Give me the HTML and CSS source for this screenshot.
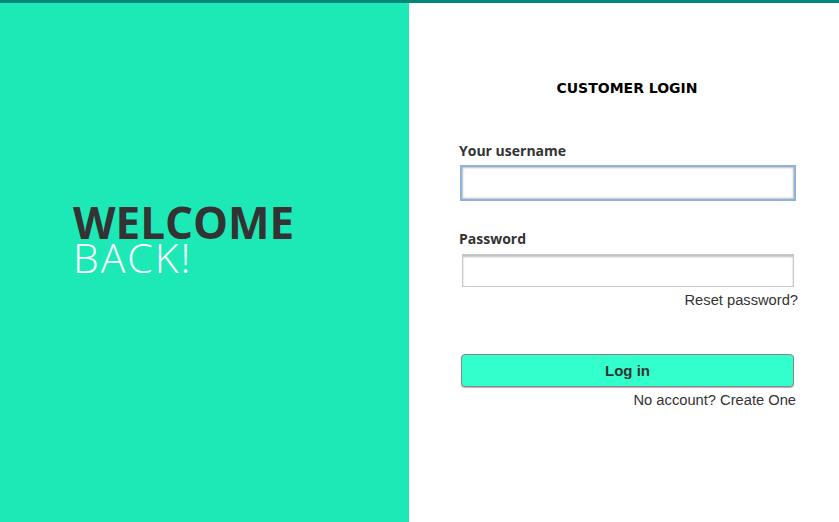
FILE: index.html
```html
<!DOCTYPE html>
<html>
<head>
<meta charset="utf-8">
<link rel="stylesheet" href="styles.css">
</head>
<body>
<div class="page">
  <div class="welcome">
    <h1 class="welcome-title"><span class="w1">WELCOME</span><span class="w2">BACK!</span></h1>
  </div>
  <div class="login">
    <h2 class="login-title">CUSTOMER LOGIN</h2>
    <form class="form">
      <label class="label">Your username</label>
      <input class="input input-focus" type="text">
      <label class="label label-pass">Password</label>
      <input class="input input-pass" type="password">
      <div class="link-row"><span class="link">Reset password?</span></div>
      <button class="btn" type="button">Log in</button>
      <div class="link-row link-row2"><span class="link">No account? Create One</span></div>
    </form>
  </div>
</div>
</body>
</html>
```
FILE: styles.css
```css
html, body {
  margin: 0;
  padding: 0;
  background: #ffffff;
}
.page {
  width: 839px;
  height: 522px;
  border-top: 3px solid #00877a;
  box-sizing: border-box;
  display: flex;
}
.welcome {
  width: 409px;
  background: #1de9b6;
  padding: 202px 0 0 73px;
  box-sizing: border-box;
}
.welcome-title {
  margin: 0;
  font-family: "Open Sans", sans-serif;
  font-size: 44px;
  line-height: 35px;
  display: flex;
  flex-direction: column;
}
.w1 {
  font-weight: 700;
  color: #333333;
}
.w2 {
  font-size: 41px;
  font-weight: 300;
  color: #ffffff;
  letter-spacing: 2px;
}
.login {
  flex: 1;
  padding: 77px 41px 0 50px;
  display: flex;
  flex-direction: column;
}
.login-title {
  margin: 0;
  text-align: center;
  font-family: "DejaVu Sans", sans-serif;
  font-size: 14px;
  font-weight: 700;
  color: #000;
  line-height: 16px;
  padding-right: 3px;
}
.form {
  display: flex;
  flex-direction: column;
  margin-top: 46px;
}
.label {
  font-family: "Open Sans", sans-serif;
  font-weight: 700;
  font-size: 14px;
  color: #333;
  line-height: 18px;
  margin-bottom: 5px;
}
.label-pass {
  margin-top: 29px;
  margin-bottom: 6px;
}
.input {
  margin: 0 0 0 1px;
  width: 336px;
  height: 33px;
  box-sizing: border-box;
  border: 1px solid #c8c8c8;
  box-shadow: inset 0 2px 2px rgba(0,0,0,0.25);
  background: #fff;
}
.input-pass {
  margin-left: 3px;
  width: 332px;
}
.input-focus {
  height: 36px;
  border: 2px solid #8fb2dc;
  box-shadow: inset 0 0 2px 1px rgba(0,0,0,0.25);
  outline: none;
}
.link-row {
  display: flex;
  justify-content: flex-end;
  margin-top: 5px;
}
.link {
  font-family: "Liberation Sans", Arial, sans-serif;
  font-size: 14.7px;
  color: #333;
  line-height: 16px;
}
.btn {
  margin: 46px 0 0 2px;
  width: 333px;
  height: 33px;
  border: 1px solid #888;
  border-radius: 4px;
  background: #33ffcc;
  box-shadow: 0 1px 1px rgba(0,0,0,0.3);
  font-family: "Liberation Sans", Arial, sans-serif;
  font-weight: 700;
  font-size: 15px;
  color: #333;
  padding: 0;
}
.link-row2 {
  margin-top: 5px;
  padding-right: 2px;
}
```
